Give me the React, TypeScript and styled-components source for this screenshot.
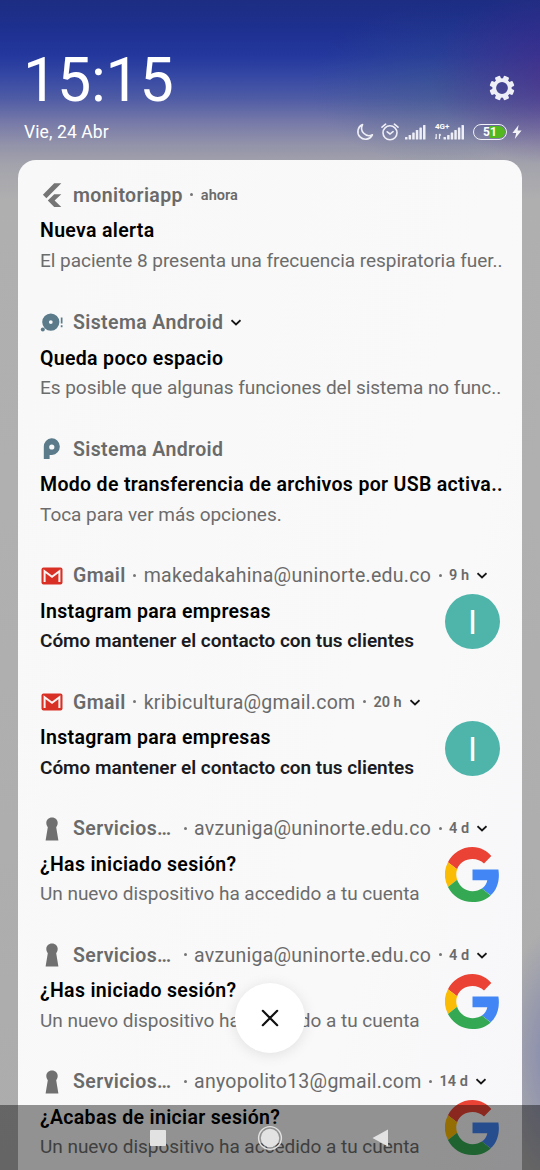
import React from "react";
import styled, { createGlobalStyle } from "styled-components";

const GlobalStyle = createGlobalStyle`
  * { box-sizing: border-box; }
  body { margin: 0; font-family: Roboto, "Noto Sans", sans-serif; overflow: hidden; }
  svg { display: block; }
`;

const Screen = styled.div`
  position: relative;
  width: 540px;
  height: 1170px;
  overflow: hidden;
  background:
    radial-gradient(ellipse 60px 130px at 560px 1055px, rgba(122, 128, 172, 0.9), rgba(122, 128, 172, 0) 100%),
    radial-gradient(ellipse 130px 90px at 560px 75px, rgba(82, 42, 128, 0.65), rgba(82, 42, 128, 0) 100%),
    radial-gradient(ellipse 130px 80px at 440px 85px, rgba(58, 90, 130, 0.35), rgba(58, 90, 130, 0) 100%),
    linear-gradient(180deg, #1c2d82 0, #1e3090 30px, #23379d 55px, #3447a3 75px, #4e5ba5 98px, #7679a8 122px, #9393aa 145px, #a3a3ac 165px, #afafb0 200px, #b0b0b0 500px, #acacac 1170px);
`;

const TopBar = styled.header`
  height: 160px;
  padding: 45px 18px 0 24px;
  color: #fff;
`;

const ClockRow = styled.div`
  display: flex;
  justify-content: space-between;
  height: 70px;
`;

const Clock = styled.div`
  margin-left: -1px;
  font-size: 61px;
  line-height: 70px;
  letter-spacing: -0.3px;
`;

const GearBox = styled.div`
  padding: 30px 7px 0 0;
`;

const StatusRow = styled.div`
  display: flex;
  justify-content: space-between;
  align-items: center;
  height: 34px;
`;

const DateText = styled.div`
  font-size: 17.5px;
  line-height: 20px;
  letter-spacing: 0.1px;
`;

const StatusIcons = styled.div`
  display: flex;
  align-items: center;
  height: 20px;
`;

const Slot = styled.div<{ $gap: number }>`
  margin-left: ${(p) => p.$gap}px;
`;

const Mobile = styled.div`
  position: relative;
  margin-left: 9px;
`;

const NetworkType = styled.span`
  position: absolute;
  left: 0;
  top: -1px;
  font-size: 8px;
  line-height: 8px;
  font-weight: 700;
`;

const Battery = styled.div`
  margin-left: 8px;
  width: 34px;
  height: 16px;
  border: 1.5px solid #f1f1f8;
  border-radius: 8px;
  padding: 1px;
`;

const BatteryFill = styled.div`
  height: 100%;
  border-radius: 6px;
  background: linear-gradient(90deg, transparent 51%, #52b81e 51%);
  color: #fff;
  font-size: 12px;
  line-height: 12.5px;
  font-weight: 700;
  text-align: center;
`;

const Card = styled.main`
  margin: 0 18px;
  padding-top: 20px;
  height: 1030px;
  border-radius: 18px 18px 0 0;
  background: linear-gradient(105deg, #f8f8f8 0, #f9f9f9 70%, #f7f7fa 100%);
`;

const Item = styled.article<{ $first?: boolean }>`
  height: ${(p) => (p.$first ? 127.5 : 126.5)}px;
  padding: 0 20px 0 22px;
`;

const ItemHeader = styled.div`
  display: flex;
  align-items: center;
  height: 30px;
  color: #6a6a6a;
  white-space: nowrap;
`;

const IconBox = styled.div`
  display: flex;
  justify-content: center;
  width: 24px;
  margin-right: 9px;
`;

const AppName = styled.span<{ $wide?: boolean }>`
  min-width: ${(p) => (p.$wide ? "103px" : "0")};
  font-size: 19.5px;
  font-weight: 600;
  letter-spacing: 0.37px;
`;

const Dot = styled.span`
  width: 3px;
  height: 3px;
  margin: 0 7.5px 1px;
  border-radius: 50%;
  background: #757575;
  flex: none;
`;

const Account = styled.span`
  font-size: 19.5px;
  letter-spacing: 0.27px;
`;

const Time = styled.span`
  font-size: 14.5px;
  font-weight: 600;
`;

const Chevron = styled.div`
  margin-left: 8px;
`;

const ItemBody = styled.div`
  display: flex;
  justify-content: space-between;
`;

const Title = styled.div`
  margin-top: 6px;
  height: 29.75px;
  line-height: 30px;
  font-size: 19.5px;
  font-weight: 600;
  letter-spacing: 0.33px;
  color: #000;
  white-space: nowrap;
`;

const Text = styled.div<{ $bold?: boolean }>`
  height: 30px;
  line-height: 30px;
  font-size: 19px;
  font-weight: ${(p) => (p.$bold ? 600 : 400)};
  letter-spacing: -0.03px;
  color: ${(p) => (p.$bold ? "#1b1b1f" : "#6c6c6c")};
  white-space: nowrap;
`;

const Thumb = styled.div`
  margin: 3.5px 2px 0 0;
  width: 55px;
  height: 55px;
`;

const Avatar = styled(Thumb)`
  border-radius: 50%;
  background: #4fb5aa;
  color: #fff;
  font-size: 33px;
  line-height: 57px;
  text-align: center;
`;

const ClearButton = styled.button`
  position: absolute;
  left: 235px;
  top: 983px;
  width: 70px;
  height: 70px;
  display: flex;
  align-items: center;
  justify-content: center;
  padding: 0;
  border: 0;
  border-radius: 50%;
  background: #fff;
  box-shadow: 0 2px 14px rgba(0, 0, 0, 0.1);
`;

const NavBar = styled.nav`
  position: absolute;
  left: 0;
  right: 0;
  bottom: 0;
  height: 65px;
  display: flex;
  justify-content: center;
  align-items: center;
  gap: 86px;
  background: rgba(0, 0, 0, 0.41);
`;

const GearIcon = () => (
  <svg width="26" height="26" viewBox="0 0 26 26">
    <g fill="#eeeef6">
      {[22.5, 67.5, 112.5, 157.5, 202.5, 247.5, 292.5, 337.5].map((a) => (
        <rect key={a} x="10.2" y="0.6" width="5.6" height="6" rx="1.2" transform={`rotate(${a} 13 13)`} />
      ))}
    </g>
    <circle cx="13" cy="13" r="7.8" fill="none" stroke="#eeeef6" strokeWidth="3.8" />
  </svg>
);

const MoonIcon = () => (
  <svg width="18" height="18" viewBox="0 0 18 18" fill="none" stroke="#eeeef6" strokeWidth="1.6" strokeLinejoin="round">
    <path d="M6.6 1.6A7.6 7.6 0 1 0 16.4 11.8A7.4 7.4 0 0 1 6.6 1.6Z" />
  </svg>
);

const AlarmIcon = () => (
  <svg width="18" height="18" viewBox="0 0 18 18" fill="none" stroke="#eeeef6" strokeWidth="1.6" strokeLinecap="round">
    <circle cx="9" cy="9.8" r="7" />
    <path d="M6.2 8.8L9 11L12 8.6M1 4.2L4.6 1.2M17 4.2L13.4 1.2" />
  </svg>
);

const Bars = ({ width = 21, offset = 0, arrows = false }) => (
  <svg width={width} height="16" viewBox={`0 0 ${width} 16`} fill="#eeeef6">
    {[2.5, 4.5, 7, 9.5, 12, 14.5].map((h, i) => (
      <rect key={h} x={offset + i * 3.6} y={15.5 - h} width="2.5" height={h} rx="0.6" />
    ))}
    {arrows && <path d="M1.2 10v5M1.2 15l-1-1.5M4.5 15v-5M4.5 10l1.3 1.5" stroke="#eeeef6" strokeWidth="1.2" fill="none" />}
  </svg>
);

const BoltIcon = () => (
  <svg width="10" height="14" viewBox="0 0 10 14" fill="#f3f3f8">
    <path d="M6.6 0L0.4 8H4.2L2.8 14L9.6 5.4H5.6Z" />
  </svg>
);

const FlutterIcon = () => (
  <svg width="20" height="24" viewBox="0 0 20 24" fill="#757575">
    <path d="M12.2 0.3H19.3L4.4 15.2L0.9 11.7ZM12.2 11.2H19.3L12.6 17.5L19.3 24H12.2L5.8 17.5Z" />
  </svg>
);

const DiskIcon = () => (
  <svg width="24" height="20" viewBox="0 0 24 20" fill="#5b7b8b">
    <path fillRule="evenodd" d="M10.8 0.5a8.6 8.6 0 1 1 0 17.2a8.6 8.6 0 0 1 0-17.2ZM10.8 7.2a1.9 1.9 0 1 0 0 3.8a1.9 1.9 0 0 0 0-3.8Z" />
    <circle cx="2.8" cy="16.6" r="2" />
    <path d="M20.8 4.5h1.7v6h-1.7zM20.8 12.2h1.7v2h-1.7z" />
  </svg>
);

const UsbIcon = () => (
  <svg width="18" height="22" viewBox="0 0 18 22" fill="#5b7b8b">
    <path fillRule="evenodd" d="M0.8 9A8 8.4 0 1 1 9 17H6.6V21H0.8ZM8.8 6.4a2.6 2.6 0 1 0 0 5.2a2.6 2.6 0 0 0 0-5.2Z" />
  </svg>
);

const GmailIcon = () => (
  <svg width="22" height="18" viewBox="0 0 22 18">
    <rect x="0.5" y="0.5" width="21" height="17" rx="2" fill="#d93025" />
    <path d="M3.6 15V4.2L11 9.8L18.4 4.2V15" fill="none" stroke="#fdf3f2" strokeWidth="2" />
  </svg>
);

const KeyholeIcon = () => (
  <svg width="14" height="24" viewBox="0 0 14 24" fill="#707070">
    <path d="M7 0.5C10.4 0.5 12.7 3 12.7 5.8C12.7 7.8 12 9.2 11.2 10.2L13.4 23.5H0.6L2.8 10.2C2 9.2 1.3 7.8 1.3 5.8C1.3 3 3.6 0.5 7 0.5Z" />
  </svg>
);

const ChevronIcon = () => (
  <svg width="10" height="7" viewBox="0 0 10 7" fill="none" stroke="#151515" strokeWidth="1.8">
    <path d="M0.5 1.2L5 5.4L9.5 1.2" />
  </svg>
);

const GoogleIcon = () => (
  <svg width="55" height="55" viewBox="2 2 44 44">
    <path fill="#EA4335" d="M24 11.5c3.54 0 6.71 1.22 9.21 3.6l5.85-5.85C35.9 5.38 30.47 2 24 2 15.4 2 7.96 6.93 4.34 14.12l7.35 5.7C13.42 14.62 18.27 11.5 24 11.5z" />
    <path fill="#4285F4" d="M45.1 24.5c0-1.6-.15-3.1-.4-4.5H24v8.5h11.85c-.5 2.75-2.05 5.08-4.4 6.65l7.1 5.5C42.7 36.9 45.1 31.2 45.1 24.5z" />
    <path fill="#FBBC05" d="M11.7 28.2a13.2 13.2 0 0 1 0-8.4l-7.36-5.7a22 22 0 0 0 0 19.8z" />
    <path fill="#34A853" d="M24 46c5.94 0 10.92-1.95 14.56-5.3l-7.1-5.5c-1.97 1.32-4.49 2.1-7.46 2.1-5.73 0-10.58-3.87-12.31-9.1l-7.35 5.7C7.96 41.07 15.4 46 24 46z" />
  </svg>
);

type Notice = {
  icon: React.ReactNode;
  app: string;
  account?: string;
  time?: string;
  chevron?: boolean;
  title: string;
  text: string;
  bold?: boolean;
  thumb?: "avatar" | "google";
};

const notices: Notice[] = [
  { icon: <FlutterIcon />, app: "monitoriapp", time: "ahora", title: "Nueva alerta", text: "El paciente 8 presenta una frecuencia respiratoria fuer.." },
  { icon: <DiskIcon />, app: "Sistema Android", chevron: true, title: "Queda poco espacio", text: "Es posible que algunas funciones del sistema no func.." },
  { icon: <UsbIcon />, app: "Sistema Android", title: "Modo de transferencia de archivos por USB activa..", text: "Toca para ver más opciones." },
  { icon: <GmailIcon />, app: "Gmail", account: "makedakahina@uninorte.edu.co", time: "9 h", chevron: true, title: "Instagram para empresas", text: "Cómo mantener el contacto con tus clientes", bold: true, thumb: "avatar" },
  { icon: <GmailIcon />, app: "Gmail", account: "kribicultura@gmail.com", time: "20 h", chevron: true, title: "Instagram para empresas", text: "Cómo mantener el contacto con tus clientes", bold: true, thumb: "avatar" },
  { icon: <KeyholeIcon />, app: "Servicios…", account: "avzuniga@uninorte.edu.co", time: "4 d", chevron: true, title: "¿Has iniciado sesión?", text: "Un nuevo dispositivo ha accedido a tu cuenta", thumb: "google" },
  { icon: <KeyholeIcon />, app: "Servicios…", account: "avzuniga@uninorte.edu.co", time: "4 d", chevron: true, title: "¿Has iniciado sesión?", text: "Un nuevo dispositivo ha accedido a tu cuenta", thumb: "google" },
  { icon: <KeyholeIcon />, app: "Servicios…", account: "anyopolito13@gmail.com", time: "14 d", chevron: true, title: "¿Acabas de iniciar sesión?", text: "Un nuevo dispositivo ha accedido a tu cuenta", thumb: "google" },
];

export default function App() {
  return (
    <Screen>
      <GlobalStyle />
      <TopBar>
        <ClockRow>
          <Clock>15:15</Clock>
          <GearBox><GearIcon /></GearBox>
        </ClockRow>
        <StatusRow>
          <DateText>Vie, 24 Abr</DateText>
          <StatusIcons>
            <MoonIcon />
            <Slot $gap={7}><AlarmIcon /></Slot>
            <Slot $gap={6}><Bars /></Slot>
            <Mobile>
              <NetworkType>4G+</NetworkType>
              <Bars width={30} offset={8.5} arrows />
            </Mobile>
            <Battery><BatteryFill>51</BatteryFill></Battery>
            <Slot $gap={5}><BoltIcon /></Slot>
          </StatusIcons>
        </StatusRow>
      </TopBar>
      <Card>
        {notices.map((n, i) => (
          <Item key={i} $first={i === 0}>
            <ItemHeader>
              <IconBox>{n.icon}</IconBox>
              <AppName $wide={n.app === "Servicios…"}>{n.app}</AppName>
              {n.account && <><Dot /><Account>{n.account}</Account></>}
              {n.time && <><Dot /><Time>{n.time}</Time></>}
              {n.chevron && <Chevron><ChevronIcon /></Chevron>}
            </ItemHeader>
            <ItemBody>
              <div>
                <Title>{n.title}</Title>
                <Text $bold={n.bold}>{n.text}</Text>
              </div>
              {n.thumb === "avatar" && <Avatar>I</Avatar>}
              {n.thumb === "google" && <Thumb><GoogleIcon /></Thumb>}
            </ItemBody>
          </Item>
        ))}
      </Card>
      <ClearButton aria-label="Borrar todo">
        <svg width="18" height="18" viewBox="0 0 18 18" stroke="#111" strokeWidth="2.2" strokeLinecap="round">
          <path d="M1.8 1.8L16.2 16.2M16.2 1.8L1.8 16.2" />
        </svg>
      </ClearButton>
      <NavBar>
        <svg width="26" height="26" viewBox="0 0 26 26"><rect x="5" y="5" width="16" height="16" rx="0.8" fill="#e2e2e2" /></svg>
        <svg width="26" height="26" viewBox="0 0 26 26"><circle cx="13" cy="13" r="11.4" fill="none" stroke="#e2e2e2" strokeWidth="1.4" /><circle cx="13" cy="13" r="9.2" fill="#e2e2e2" /></svg>
        <svg width="26" height="26" viewBox="0 0 26 26"><path d="M19 4.5V21.5L3.5 13Z" fill="#e2e2e2" /></svg>
      </NavBar>
    </Screen>
  );
}
